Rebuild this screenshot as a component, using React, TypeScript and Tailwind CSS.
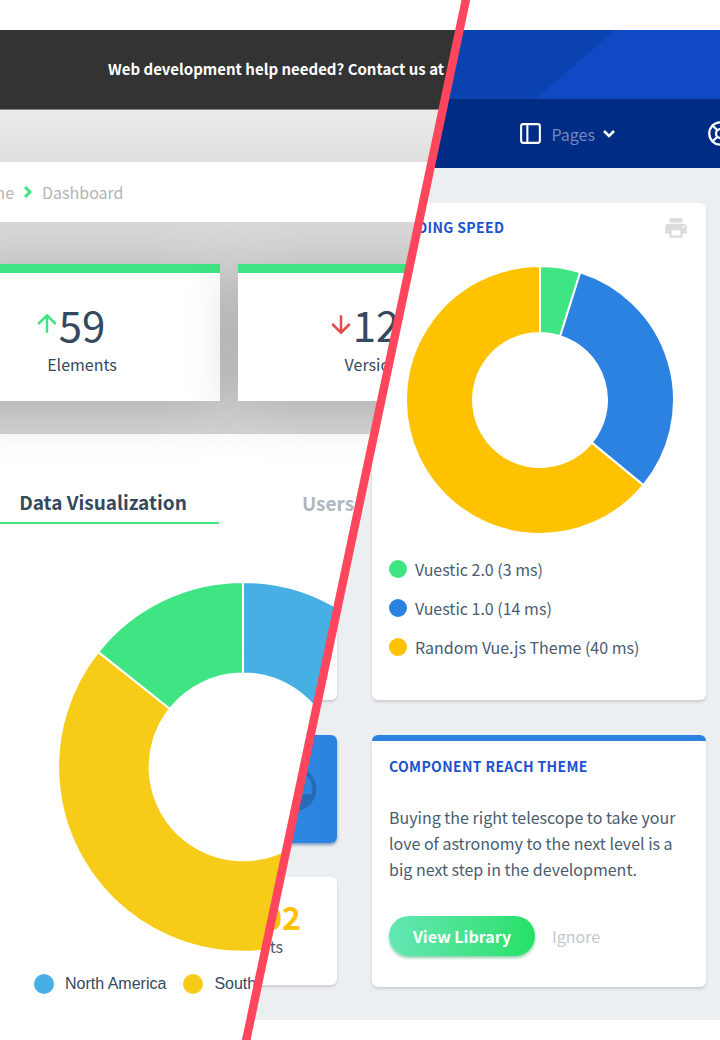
import React from "react";
import { LifeBuoy, PanelLeft } from "lucide-react";
import { MdPrint } from "react-icons/md";

type Slice = { color: string; from: number; to: number };

function slicePath(outer: number, inner: number, from: number, to: number) {
  const point = (r: number, deg: number) => {
    const a = (deg * Math.PI) / 180;
    return `${(r * Math.sin(a)).toFixed(2)} ${(-r * Math.cos(a)).toFixed(2)}`;
  };
  const large = to - from > 180 ? 1 : 0;
  return `M${point(outer, from)}A${outer} ${outer} 0 ${large} 1 ${point(outer, to)}L${point(inner, to)}A${inner} ${inner} 0 ${large} 0 ${point(inner, from)}Z`;
}

function Donut({ slices, outer, inner, className, label }: { slices: Slice[]; outer: number; inner: number; className: string; label: string }) {
  const r = outer + 1;
  return (
    <svg role="img" aria-label={label} viewBox={`${-r} ${-r} ${2 * r} ${2 * r}`} className={className}>
      {slices.map((s) => (
        <path key={s.color} d={slicePath(outer, inner, s.from, s.to)} fill={s.color} stroke="#fff" strokeWidth="2" />
      ))}
    </svg>
  );
}

function Arrow({ down = false }: { down?: boolean }) {
  return (
    <svg viewBox="4 4 16 16" fill="none" stroke="currentColor" strokeWidth="2" className={down ? "size-5 text-[#e34a4a]" : "size-5 text-[#40e583]"} aria-hidden="true">
      <path d={down ? "m5 12 7 7 7-7M12 19V5" : "m5 12 7-7 7 7M12 19V5"} />
    </svg>
  );
}

function StatCard({ value, label, down }: { value: string; label: string; down?: boolean }) {
  return (
    <div className="h-[137px] w-[276px] shrink-0 border-t-[9px] border-[#40e583] bg-white pt-[27px] text-center text-[#34495e] shadow-[0_8px_56px_rgba(0,0,0,0.2)]">
      <div className="flex items-center justify-center gap-0.5 pr-[22px]">
        <Arrow down={down} />
        <span className="text-[42px] leading-12">{value}</span>
      </div>
      <div className="text-base leading-8">{label}</div>
    </div>
  );
}

function OldDashboard() {
  return (
    <div className="col-start-1 row-start-1 min-w-0 overflow-hidden bg-white pt-[30px] [clip-path:polygon(0_0,64.7%_0,34.2%_100%,0_100%)]">
      <div className="flex h-20 items-center border-b border-[#888] bg-[#333] pl-27 text-[15px] font-bold whitespace-nowrap text-white">
        Web development help needed? Contact us at
      </div>
      <div className="h-[52px] bg-linear-to-b from-[#ececec] to-[#dedede]" />
      <nav aria-label="Breadcrumb" className="-ml-[31px] flex h-[60px] items-center gap-2.5 text-base text-[#b4b4b4]">
        <a href="#home">Home</a>
        <svg viewBox="0 0 8 12" className="h-3 w-2" fill="none" stroke="#40e583" strokeWidth="3" aria-hidden="true">
          <path d="m1 1 5 5-5 5" />
        </svg>
        <a href="#dashboard">Dashboard</a>
      </nav>
      <section className="-ml-14 flex h-[212px] gap-[18px] bg-linear-to-b from-[#d8d8d8] to-[#d6d6d6] pt-[42px]">
        <StatCard value="59" label="Elements" />
        <StatCard value="12" label="Versions" down />
      </section>
      <div role="tablist" className="-ml-[13px] flex pt-12 text-[19px] font-bold">
        <button role="tab" aria-selected="true" className="h-[42px] w-[232px] shrink-0 border-b-2 border-[#40e583] text-[#34495e]">
          Data Visualization
        </button>
        <button role="tab" aria-selected="false" className="h-[42px] w-[232px] shrink-0 pl-[83px] text-left text-[#aeb6bf]">
          Users
        </button>
      </div>
      <Donut
        label="Data by region"
        outer={184}
        inner={93}
        className="mt-[57px] ml-[57px] size-[372px]"
        slices={[
          { color: "#46b0e5", from: 0, to: 130 },
          { color: "#f7cc19", from: 130, to: 308.5 },
          { color: "#40e583", from: 308.5, to: 360 },
        ]}
      />
      <ul className="mt-[19px] flex h-6 items-center gap-[17px] pl-[34px] font-['Liberation_Sans',sans-serif] text-base whitespace-nowrap text-[#34495e]">
        <li className="flex items-center gap-[11px]">
          <span className="size-5 rounded-full bg-[#46b0e5]" />
          North America
        </li>
        <li className="flex items-center gap-[11px]">
          <span className="size-5 rounded-full bg-[#f7cc19]" />
          South
        </li>
      </ul>
    </div>
  );
}

const card = "rounded-md bg-white shadow-[0_2px_3px_rgba(0,0,0,0.14)]";

function NewDashboard() {
  return (
    <div className="col-start-1 row-start-1 min-w-0 overflow-hidden pt-[30px] pb-5">
      <div className="h-[69px] bg-[#0a43af]">
        <div className="ml-[74.4%] h-full bg-[#0f4ac4] [clip-path:polygon(79px_0,100%_0,100%_100%,0_100%)]" />
      </div>
      <nav aria-label="Main" className="flex h-[69px] items-center bg-[#002c85] pl-[72%] text-base text-[#7289bb]">
        <button className="flex shrink-0 items-center gap-2">
          <PanelLeft size={25} className="text-white" />
          Pages
          <svg viewBox="0 0 12 8" className="h-2 w-3" fill="none" stroke="#fff" strokeWidth="2.6" aria-hidden="true">
            <path d="m1 1 5 5 5-5" />
          </svg>
        </button>
        <a href="#help" aria-label="Help" className="ml-[92px] shrink-0 text-white">
          <LifeBuoy size={27} />
        </a>
      </nav>
      <main className="grid grid-cols-2 gap-[35px] bg-[#ebeff2] pt-[35px] pr-3.5 pb-[33px] pl-[3px] text-[#4a5c70]">
        <div className={`${card} h-[497px]`} />
        <section className={`${card} h-[497px] px-[17px] pt-3`}>
          <div className="flex items-start justify-between">
            <h2 className="text-sm leading-6 font-bold tracking-wide text-[#1b52ce]">LOADING SPEED</h2>
            <button aria-label="Print" className="text-[#dcdcdc]">
              <MdPrint size={26} />
            </button>
          </div>
          <Donut
            label="Loading speed"
            outer={134}
            inner={67}
            className="mt-6 ml-4 size-[270px]"
            slices={[
              { color: "#40e583", from: 0, to: 17.5 },
              { color: "#2c82e0", from: 17.5, to: 129.5 },
              { color: "#ffc200", from: 129.5, to: 360 },
            ]}
          />
          <ul className="mt-[22px] flex flex-col gap-[15px] text-base leading-6">
            <li className="flex items-center gap-2">
              <span className="size-[18px] rounded-full bg-[#40e583]" />
              Vuestic 2.0 (3 ms)
            </li>
            <li className="flex items-center gap-2">
              <span className="size-[18px] rounded-full bg-[#2c82e0]" />
              Vuestic 1.0 (14 ms)
            </li>
            <li className="flex items-center gap-2">
              <span className="size-[18px] rounded-full bg-[#ffc200]" />
              Random Vue.js Theme (40 ms)
            </li>
          </ul>
        </section>
        <div className="flex flex-col gap-[34px]">
          <div className="flex h-[108px] items-center justify-end rounded-md bg-linear-to-r from-[#3aa5e8] to-[#2c82e0] pr-5 shadow-[0_2px_3px_rgba(30,80,140,0.5)]">
            <svg viewBox="0 0 44 44" className="size-11 text-[#246cb5]" fill="currentColor" aria-hidden="true">
              <circle cx="22" cy="22" r="19.5" fill="none" stroke="currentColor" strokeWidth="4" />
              <circle cx="25" cy="18" r="7" />
              <path d="M5 33c5-7 11-5 17-5s12-2 17 0c-4 9-10 14-17 14S9 39 5 33Z" />
            </svg>
          </div>
          <div className={`${card} h-[108px] pt-[21px] text-right`}>
            <div className="pr-9 text-[32px] leading-9 font-bold text-[#ffc200]">02</div>
            <div className="pr-[54px] text-base leading-6">ts</div>
          </div>
        </div>
        <section className={`${card} h-[252px] overflow-hidden border-t-6 border-[#2c82e0] px-[17px] pt-[13px]`}>
          <h2 className="text-sm leading-6 font-bold tracking-wide text-[#1b52ce]">COMPONENT REACH THEME</h2>
          <p className="pt-[26px] text-base leading-[26px]">Buying the right telescope to take your love of astronomy to the next level is a big next step in the development.</p>
          <div className="mt-[34px] flex items-center gap-[17px] text-base">
            <button className="h-10 w-[146px] rounded-full bg-linear-to-r from-[#63e6b4] to-[#23e066] font-bold text-white shadow-[0_2px_3px_rgba(30,160,90,0.5)]">View Library</button>
            <button className="text-[#c3c7cc]">Ignore</button>
          </div>
        </section>
      </main>
    </div>
  );
}

export default function App() {
  return (
    <div className="relative grid grid-cols-1 overflow-hidden bg-white font-['Noto_Sans_CJK_SC',sans-serif]">
      <NewDashboard />
      <OldDashboard />
      <div className="pointer-events-none absolute inset-0 bg-[#ff465d] [clip-path:polygon(64.1%_0,65.3%_0,34.8%_100%,33.6%_100%)]" />
    </div>
  );
}
